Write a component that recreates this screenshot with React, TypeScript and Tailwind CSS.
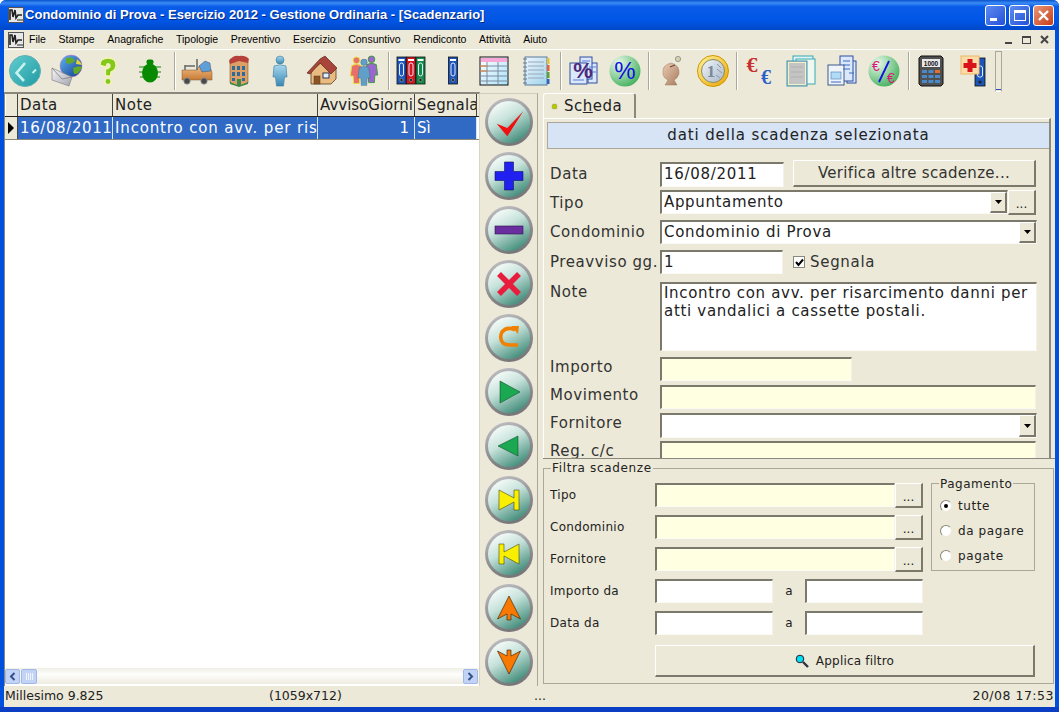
import React from "react";

const sunken = "border-t-2 border-l-2 border-r border-b border-t-[#7b796c] border-l-[#7b796c] border-r-[#f4f2e8] border-b-[#fbfaf4]";
const raised = "border-t border-l border-r-2 border-b-2 border-t-white border-l-white border-r-[#7b796c] border-b-[#7b796c] bg-[#ece9d8]";

function AppIcon({ s = 16 }: { s?: number }) {
  return (
    <svg width={s} height={s} viewBox="0 0 16 16">
      <rect x="0.5" y="0.5" width="15" height="15" fill="#e8e8e8" stroke="#555" />
      <path d="M2 13 L2 3 L4 3 L5 10 L7 3 L8 11 L10 8 L14 8" fill="none" stroke="#222" strokeWidth="1.6" />
      <path d="M9 13 L15 13" stroke="#888" strokeWidth="2" />
    </svg>
  );
}

function Tb({ children }: { children: React.ReactNode }) {
  return <div className="w-[41.7px] h-[42px] shrink-0 flex items-center justify-center">{children}</div>;
}

function Sep() {
  return <div className="w-[2px] h-[38px] shrink-0 border-l border-l-[#aca899] border-r border-r-white" />;
}

function Grad({ id, a, b, diag = true }: { id: string; a: string; b: string; diag?: boolean }) {
  return (
    <linearGradient id={id} x1="0" y1="0" x2={diag ? "1" : "0"} y2="1">
      <stop offset="0" stopColor={a} />
      <stop offset="1" stopColor={b} />
    </linearGradient>
  );
}

const I = { width: 32, height: 32, viewBox: "0 0 32 32", className: "overflow-visible" };

function Folder({ x, c }: { x: number; c: string }) {
  return (
    <g>
      <rect x={x} y="2" width="9" height="27" fill={c} stroke="#111" strokeWidth="0.8" />
      <rect x={x + 1.5} y="4" width="6" height="2" fill="#fff" />
      <rect x={x + 2.5} y="8" width="4" height="13" rx="2" fill="none" stroke="#dfeaff" strokeWidth="1" />
      <circle cx={x + 4.5} cy="25" r="1.6" fill="#222" stroke="#bbb" strokeWidth="0.5" />
    </g>
  );
}

function Person({ x, y, c, k = 1, st = "#00000055", sw = 0.5 }: { x: number; y: number; c: string; k?: number; st?: string; sw?: number }) {
  return (
    <g transform={`translate(${x} ${y}) scale(${k})`}>
      <circle cx="0" cy="3.5" r="3.5" fill={c} stroke={st} strokeWidth={sw} />
      <path d="M-5 9 Q0 6.5 5 9 L6.5 20 L3.5 20 L3 28 L-3 28 L-3.5 20 L-6.5 20 Z" fill={c} stroke={st} strokeWidth={sw} />
    </g>
  );
}

function Doc({ x, y, w, h, c = "#dbe8fb", s = "#2f4f9f" }: { x: number; y: number; w: number; h: number; c?: string; s?: string }) {
  return <rect x={x} y={y} width={w} height={h} fill={c} stroke={s} strokeWidth="1" />;
}

const toolbar: React.ReactNode[][] = [
  [
    <svg {...I} key="a">
      <defs><Grad id="t1" a="#62cdd0" b="#1f9aa2" /></defs>
      <circle cx="16" cy="16" r="15.5" fill="url(#t1)" stroke="#5fb0b4" />
      <path d="M16 8 L7.5 18 L15 26" fill="none" stroke="#c8f2ee" strokeWidth="2.6" />
      <path d="M27 14.5 L23.5 18" stroke="#c8f2ee" strokeWidth="2" />
    </svg>,
    <svg {...I} key="b">
      <defs><Grad id="t2" a="#5fb8f4" b="#12388a" /><Grad id="t2b" a="#f8f8f8" b="#a2a2ac" /></defs>
      <circle cx="20" cy="11" r="11" fill="url(#t2)" stroke="#d070d0" strokeWidth="0.5" />
      <path d="M15 3 Q22 1 24 6 Q20 10 15 8 Z M22 13 Q28 10 31 12 Q28 20 23 19 Z" fill="#62a82a" />
      <path d="M26 4 Q30 7 31 10 L25 9 Z" fill="#e8d23a" />
      <path d="M1 13 L21 22 L18 31 L1 25 Z" fill="url(#t2b)" stroke="#777" strokeWidth="0.6" />
      <path d="M1 13 L11 24 L21 22" fill="none" stroke="#8d8d99" />
    </svg>,
    <svg {...I} key="c">
      <path d="M8 10 Q8 3 16 3 Q24 3 24 10 Q24 15 19 17 L18.5 21 L13.5 21 L13.5 14 Q18.5 13.5 18 10 Q17 8 15 9 L14 12 Z" fill="#84c81e" stroke="#f4f4b0" strokeWidth="1.3" />
      <circle cx="16" cy="26.5" r="3" fill="#84c81e" stroke="#f4f4b0" strokeWidth="1.1" />
    </svg>,
    <svg {...I} key="d">
      <path d="M5 12 H27 M5 17 H27 M6 22 H26" stroke="#0a8a0a" strokeWidth="1" />
      <ellipse cx="16" cy="18" rx="8" ry="9.5" fill="#078a00" />
      <rect x="12.5" y="4.5" width="7" height="5" rx="2" fill="#078a00" />
    </svg>,
  ],
  [
    <svg {...I} key="a">
      <defs><Grad id="t5" a="#eebc84" b="#c87a34" diag={false} /></defs>
      <path d="M1 15 H16 L18 11 H28 L31 17 V25 H1 Z" fill="url(#t5)" stroke="#7a5a34" strokeWidth="0.5" />
      <path d="M18 11 L24 6 L29 8 L30 16 L21 17 Z" fill="#5f9fd8" stroke="#335" strokeWidth="0.4" />
      <path d="M16 15 V4 M4 15 V10 M4 11 H14" stroke="#666" strokeWidth="1.5" fill="none" />
      <circle cx="6" cy="26" r="3.2" fill="#4a4a4a" stroke="#999" strokeWidth="0.8" /><circle cx="23" cy="26" r="3.2" fill="#4a4a4a" stroke="#999" strokeWidth="0.8" />
    </svg>,
    <svg {...I} key="b">
      <path d="M7 4 L25 6 V28 L16 31 L7 28 Z" fill="#dca066" stroke="#6a4b22" strokeWidth="0.5" />
      <path d="M6 6 Q10 0 16 1 Q22 0 26 4 L25 8 L16 6 L7 9 Z" fill="#b8403a" />
      <path d="M9 11 h3 v4 h-3z M14 11 h3 v4 h-3z M19 11 h3 v4 h-3z M9 17 h3 v4 h-3z M14 17 h3 v4 h-3z M19 17 h3 v4 h-3z M9 23 h3 v3 h-3z M19 23 h3 v3 h-3z" fill="#2e6a9a" />
      <path d="M7 27 L14 30 V24 H18 V30 L25 27 V29 L16 32 L7 29 Z" fill="#3f8a4a" />
    </svg>,
    <svg {...I} key="c">
      <defs><Grad id="t7" a="#a8d8f0" b="#3a88b4" diag={false} /></defs>
      <circle cx="16" cy="5" r="4" fill="url(#t7)" stroke="#3a7a9a" strokeWidth="0.6" />
      <path d="M10 11 Q16 8.5 22 11 L23 22 L20.5 22 L19.5 31 L12.5 31 L11.5 22 L9 22 Z" fill="url(#t7)" stroke="#3a7a9a" strokeWidth="0.6" />
    </svg>,
    <svg {...I} key="d">
      <path d="M5 16 V29 H25 L30 24 V14 L16 7 Z" fill="#eabb80" stroke="#5a3a1a" strokeWidth="0.8" />
      <path d="M1 18 L14 4 L19 1 L31 13 L25 19 L14 8 L4 19 Z" fill="#a8443a" stroke="#5a2a1a" strokeWidth="0.7" />
      <rect x="8" y="21" width="6" height="8" fill="#8a5428" stroke="#5a3a1a" strokeWidth="0.5" />
      <rect x="17" y="18" width="6" height="5" fill="#dff0ff" stroke="#224" strokeWidth="0.9" />
    </svg>,
    <svg {...I} key="e">
      <Person x={8.5} y={2} c="#e8706a" k={0.95} st="#e8e03a" sw={1} />
      <Person x={23.5} y={1} c="#9a68cc" k={0.95} st="#3a9a3a" sw={1} />
      <Person x={16} y={4} c="#5f9fc8" k={0.95} />
    </svg>,
  ],
  [
    <svg {...I} key="a"><Folder x={2} c="#1c55b8" /><Folder x={11.5} c="#d8141c" /><Folder x={21} c="#128a4a" /></svg>,
    <svg {...I} key="b"><Folder x={11.5} c="#1c55b8" /></svg>,
    <svg {...I} key="c">
      <defs><Grad id="t12" a="#ffffff" b="#a9e2f8" /></defs>
      <rect x="2" y="2" width="28" height="28" fill="url(#t12)" stroke="#111" />
      <rect x="3" y="3" width="26" height="4" fill="#f8a8d8" />
      <path d="M2 11 H30 M2 16 H30 M2 21 H30 M2 26 H30" stroke="#7a8aa0" />
      <path d="M9 7 V30 M20 7 V30" stroke="#7a8aa0" />
      <path d="M2 11 H9 M2 16 H9" stroke="#e88030" />
    </svg>,
    <svg {...I} key="d">
      <defs><Grad id="t13" a="#eef6ff" b="#9fd2ea" /></defs>
      <rect x="5" y="2" width="22" height="28" fill="url(#t13)" stroke="#5a7a9a" />
      <path d="M8 7 H24 M8 11 H24 M8 15 H24 M8 19 H24 M8 23 H24" stroke="#9aa8b8" />
      <path d="M3 4 H7 M3 8 H7 M3 12 H7 M3 16 H7 M3 20 H7 M3 24 H7 M3 28 H7" stroke="#6a7a8a" />
      <rect x="27" y="3" width="2.5" height="6" fill="#e8c030" /><rect x="27" y="10" width="2.5" height="6" fill="#e86030" /><rect x="27" y="17" width="2.5" height="6" fill="#60a030" /><rect x="27" y="24" width="2.5" height="5" fill="#3060c0" />
    </svg>,
  ],
  [
    <svg {...I} key="a">
      <Doc x={21} y={8} w={9} h={20} /><Doc x={13} y={2} w={12} h={22} /><Doc x={3} y={8} w={17} h={21} />
      <path d="M6 25 H17 M22 12 H29 M22 17 H29 M15 6 H23" stroke="#5a7ad8" />
      <text x="16" y="23" textAnchor="middle" fontSize="22" fontWeight="700" fontFamily="Liberation Sans" fill="#4a2a7a">%</text>
    </svg>,
    <svg {...I} key="b">
      <defs><radialGradient id="t15" cx="0.3" cy="0.25" r="0.85"><stop offset="0" stopColor="#e8f8e8" /><stop offset="1" stopColor="#3fae5a" /></radialGradient></defs>
      <circle cx="16" cy="16" r="15.5" fill="url(#t15)" />
      <text x="16" y="24" textAnchor="middle" fontSize="24" fontFamily="Liberation Sans" fill="#1010e0">%</text>
    </svg>,
  ],
  [
    <svg {...I} key="a">
      <defs><Grad id="t16" a="#eccab0" b="#a67c60" /></defs>
      <path d="M16 8 Q25 10 24 19 Q22 24 19 25 L22 30 H10 L13 25 Q8 23 8 18 Q7 10 16 8 Z" fill="url(#t16)" stroke="#8a6a50" strokeWidth="0.4" />
      <path d="M15 12 L20 10" stroke="#5a4030" strokeWidth="1" />
      <circle cx="23" cy="4" r="2.6" fill="#d4d4a8" stroke="#999" strokeWidth="1" />
    </svg>,
    <svg {...I} key="b">
      <defs><Grad id="t17" a="#fff4a0" b="#eaa400" /><Grad id="t17b" a="#f2f6fa" b="#a8b8c8" /></defs>
      <circle cx="16" cy="16" r="15.5" fill="url(#t17)" stroke="#d09800" />
      <circle cx="16" cy="16" r="11.5" fill="url(#t17b)" stroke="#8a8a5a" />
      <text x="14" y="22" textAnchor="middle" fontSize="17" fontFamily="Liberation Serif" fontWeight="700" fill="#7a8898">1</text>
      <path d="M20 9 L24 13 M20 14 L25 18 M19 20 L23 23" stroke="#8a98a8" strokeWidth="1" />
    </svg>,
  ],
  [
    <svg {...I} key="a">
      <text x="9" y="17" textAnchor="middle" fontSize="22" fontWeight="700" fontFamily="Liberation Serif" fill="#c83030">€</text>
      <text x="23" y="29" textAnchor="middle" fontSize="20" fontWeight="700" fontFamily="Liberation Serif" fill="#2a60c8">€</text>
    </svg>,
    <svg {...I} key="b">
      <Doc x={8} y={1} w={20} h={25} c="#dff4f6" s="#38a8b0" />
      <Doc x={11} y={4} w={19} h={25} c="#eef8f0" s="#38a8b0" />
      <Doc x={2} y={6} w={20} h={25} c="#c4c4c4" s="#3898b0" />
      <rect x="3.5" y="7.5" width="17" height="22" fill="none" stroke="#f4f0c8" />
      <path d="M6 12 H18 M6 17 H18 M6 22 H18" stroke="#b0b0b0" />
    </svg>,
    <svg {...I} key="c">
      <Doc x={21} y={6} w={9} h={22} /><Doc x={14} y={1} w={13} h={25} /><Doc x={2} y={10} w={16} h={20} c="#f0f4fa" s="#3a5a8a" />
      <rect x="5" y="17" width="10" height="7" fill="#b0dcf8" stroke="#4a7ab0" strokeWidth="0.6" />
      <path d="M5 27 H15 M17 6 H24 M17 10 H24 M17 14 H24 M23 18 H28" stroke="#3a6ac0" />
    </svg>,
    <svg {...I} key="d">
      <defs><radialGradient id="t21" cx="0.3" cy="0.25" r="0.85"><stop offset="0" stopColor="#e8f8e8" /><stop offset="1" stopColor="#3fae5a" /></radialGradient></defs>
      <circle cx="16" cy="16" r="15.5" fill="url(#t21)" />
      <text x="8" y="16" textAnchor="middle" fontSize="14" fontFamily="Liberation Sans" fill="#e0107a">€</text>
      <text x="23" y="28" textAnchor="middle" fontSize="14" fontFamily="Liberation Sans" fill="#e0107a">€</text>
      <path d="M21 6 L11 27" stroke="#1010e0" strokeWidth="1.8" />
    </svg>,
  ],
  [
    <svg {...I} key="a">
      <path d="M6 1 H26 L28 3 V29 L26 31 H6 L4 29 V3 Z" fill="#505050" stroke="#111" />
      <rect x="7" y="4" width="18" height="8" fill="#e8e8e8" />
      <text x="16" y="10.5" textAnchor="middle" fontSize="6.5" fontWeight="700" fontFamily="Liberation Sans" fill="#111">1000</text>
      <path d="M7 15 h5 v3 h-5z M13.5 15 h5 v3 h-5z M7 20 h5 v3 h-5z M13.5 20 h5 v3 h-5z M20 20 h5 v3 h-5z M7 25 h5 v3 h-5z M13.5 25 h5 v3 h-5z M20 25 h5 v3 h-5z" fill="#4a8ac8" />
      <rect x="20" y="15" width="5" height="3" fill="#e07030" />
    </svg>,
    <svg {...I} key="b">
      <rect x="18" y="3" width="10" height="28" fill="#1c55b8" stroke="#111" strokeWidth="0.8" />
      <rect x="20.5" y="11" width="5" height="11" rx="2" fill="none" stroke="#dfeaff" />
      <circle cx="23" cy="27" r="1.6" fill="#222" />
      <rect x="4" y="1" width="18" height="18" fill="#fbdca8" stroke="#f0b868" />
      <path d="M10.5 4 h5 v4 h4 v5 h-4 v4 h-5 v-4 h-4 v-5 h4 z" fill="#d81418" />
    </svg>,
  ],
];

function Round({ children }: { children: React.ReactNode }) {
  return (
    <div className="w-[48px] h-[48px] shrink-0 rounded-full p-[3px] bg-[linear-gradient(160deg,#c4c4c8,#8a8a8c_60%,#6e6e70)]">
      <div className="w-full h-full rounded-full bg-[linear-gradient(150deg,#f4faf8_12%,#c6e2da_42%,#2f806c_95%)] flex items-center justify-center">
        {children}
      </div>
    </div>
  );
}

const R = { width: 34, height: 34, viewBox: "0 0 34 34" };
const roundIcons: React.ReactNode[] = [
  <svg {...R}><path d="M4.7 18.7 L15.3 23 L31.3 6.3 L15.3 31.3 Z" fill="#f01010" /></svg>,
  <svg {...R}><path d="M12.5 3 H21.5 V12.5 H31 V21.5 H21.5 V31 H12.5 V21.5 H3 V12.5 H12.5 Z" fill="#2020f0" stroke="#101060" strokeWidth="0.6" /></svg>,
  <svg {...R}><rect x="3" y="13" width="28" height="8" fill="#6a2f9e" stroke="#301050" strokeWidth="0.6" /></svg>,
  <svg {...R}><path d="M7 7 L27 27 M27 7 L7 27" stroke="#e81c3c" strokeWidth="5.5" fill="none" /></svg>,
  <svg {...R}><path d="M23 9 Q15 5 10 11 Q7 17 11 22 Q13 24 18 24 H26" fill="none" stroke="#f08000" strokeWidth="3.6" /><path d="M19 5 L27 5 L26 13 Z" fill="#f08000" /></svg>,
  <svg {...R}><path d="M8 6 L28 17 L8 28 Z" fill="#1aa850" stroke="#0a3a20" strokeWidth="0.5" /></svg>,
  <svg {...R}><path d="M26 7 L6 17 L26 27 Z" fill="#1aa850" stroke="#0a3a20" strokeWidth="0.5" /></svg>,
  <svg {...R}><path d="M7 7 L22 15 V7 H27 V27 H22 V19 L7 27 Z" fill="#f8f000" stroke="#302800" strokeWidth="0.5" /></svg>,
  <svg {...R}><path d="M27 7 L12 15 V7 H7 V27 H12 V19 L27 27 Z" fill="#f8f000" stroke="#302800" strokeWidth="0.5" /></svg>,
  <svg {...R}><path d="M17 5 L28.5 28 L19 23 V29 H15 V23 L5.5 28 Z" fill="#f87800" stroke="#301800" strokeWidth="0.6" /></svg>,
  <svg {...R}><path d="M17 29 L28.5 6 L19 11 V5 H15 V11 L5.5 6 Z" fill="#f87800" stroke="#301800" strokeWidth="0.6" /></svg>,
];

function Arrow() {
  return (
    <div className={`w-[17px] h-full shrink-0 ${raised} flex items-center justify-center`}>
      <svg width="7" height="4" viewBox="0 0 7 4"><path d="M0 0 H7 L3.5 4 Z" fill="#000" /></svg>
    </div>
  );
}

function Dots({ cls }: { cls: string }) {
  return <div className={`${cls} ${raised} flex items-end justify-center pb-[2px] text-[12px] leading-[14px] text-[#222]`}>...</div>;
}

function L({ children }: { children: React.ReactNode }) {
  return <div className="w-[110px] shrink-0 text-[15px] tracking-[0.58px] leading-[20px] text-[#333] whitespace-nowrap">{children}</div>;
}

function FL({ children }: { children: React.ReactNode }) {
  return <div className="w-[105px] shrink-0 text-[12px] tracking-[0.3px] text-[#222]">{children}</div>;
}

function Radio({ on, label }: { on?: boolean; label: string }) {
  return (
    <div className="flex items-center h-[25px] gap-[6px]">
      <div className="w-[12px] h-[12px] rounded-full bg-white border border-t-[#8a887c] border-l-[#8a887c] border-r-[#ece9d8] border-b-[#ece9d8] flex items-center justify-center">
        {on && <div className="w-[4px] h-[4px] rounded-full bg-black" />}
      </div>
      <span className="text-[12px] tracking-[0.6px] text-[#222]">{label}</span>
    </div>
  );
}

export default function App() {
  return (
    <div className="w-[1059px] h-[712px] flex flex-col overflow-hidden bg-[#0050e0] font-['DejaVu_Sans',sans-serif] rounded-t-[6px]">
      {/* title */}
      <div className="h-[30px] shrink-0 flex items-center pl-[8px] bg-[linear-gradient(to_bottom,#0a52cc,#3a8cf6_10%,#0a5ce8_22%,#0055e5_70%,#0048c8_100%)]">
        <AppIcon />
        <div className="ml-[1px] text-[13px] font-bold font-['Liberation_Sans',sans-serif] tracking-[0.03px] text-white [text-shadow:1px_1px_0_#0a2a80]">
          Condominio di Prova - Esercizio 2012 - Gestione Ordinaria - [Scadenzario]
        </div>
        <div className="ml-auto flex gap-[3px] pr-[5px]">
          <div className="w-[21px] h-[21px] rounded-[3px] border border-white bg-[linear-gradient(135deg,#5c8cf0,#2450d8)] flex items-end pl-[4px] pb-[4px]"><div className="w-[7px] h-[3px] bg-white" /></div>
          <div className="w-[21px] h-[21px] rounded-[3px] border border-white bg-[linear-gradient(135deg,#5c8cf0,#2450d8)] flex items-center justify-center"><div className="w-[12px] h-[11px] border border-white border-t-[3px]" /></div>
          <div className="w-[21px] h-[21px] rounded-[3px] border border-white bg-[linear-gradient(135deg,#e89878,#c83c18)] flex items-center justify-center">
            <svg width="13" height="13" viewBox="0 0 13 13"><path d="M2 2 L11 11 M11 2 L2 11" stroke="#fff" strokeWidth="2.4" /></svg>
          </div>
        </div>
      </div>

      <div className="flex-1 min-h-0 mx-[4px] flex flex-col bg-[#ece9d8]">
        {/* menu */}
        <div className="h-[20px] shrink-0 flex items-center pl-[4px] border-b border-b-white text-[10.5px] font-['Liberation_Sans',sans-serif] text-black">
          <AppIcon />
          <div className="flex gap-[12.6px] ml-[5px]">
            {["File", "Stampe", "Anagrafiche", "Tipologie", "Preventivo", "Esercizio", "Consuntivo", "Rendiconto", "Attività", "Aiuto"].map((m) => (
              <span key={m}>{m}</span>
            ))}
          </div>
          <div className="ml-auto flex gap-[3px] pr-[3px]">
            <div className="w-[15px] h-[15px] flex items-end justify-center pb-[3px]"><div className="w-[7px] h-[2px] bg-[#444]" /></div>
            <div className="w-[15px] h-[15px] flex items-center justify-center"><div className="w-[9px] h-[8px] border border-[#444] border-t-2" /></div>
            <div className="w-[15px] h-[15px] flex items-center justify-center">
              <svg width="9" height="9" viewBox="0 0 9 9"><path d="M1 1 L8 8 M8 1 L1 8" stroke="#444" strokeWidth="2" /></svg>
            </div>
          </div>
        </div>

        {/* toolbar */}
        <div className="h-[42px] shrink-0 flex items-center">
          <div className="w-[170px] flex shrink-0">{toolbar[0].map((x, i) => <Tb key={i}>{x}</Tb>)}</div>
          <Sep />
          <div className="w-[212px] flex shrink-0">{toolbar[1].map((x, i) => <Tb key={i}>{x}</Tb>)}</div>
          <Sep />
          <div className="w-[170px] flex shrink-0">{toolbar[2].map((x, i) => <Tb key={i}>{x}</Tb>)}</div>
          <Sep />
          <div className="w-[86px] flex shrink-0">{toolbar[3].map((x, i) => <Tb key={i}>{x}</Tb>)}</div>
          <Sep />
          <div className="w-[86px] flex shrink-0">{toolbar[4].map((x, i) => <Tb key={i}>{x}</Tb>)}</div>
          <Sep />
          <div className="w-[170px] flex shrink-0">{toolbar[5].map((x, i) => <Tb key={i}>{x}</Tb>)}</div>
          <Sep />
          <div className="w-[85px] flex shrink-0">{toolbar[6].map((x, i) => <Tb key={i}>{x}</Tb>)}</div>
          <div className="w-[7px] h-[41px] shrink-0 border border-[#aca899] border-b-white flex items-end justify-center pb-[1px]"><div className="w-[5px] h-[1px] bg-[#2a50c0]" /></div>
        </div>

        {/* main */}
        <div className="h-[594px] shrink-0 flex">
          {/* grid */}
          <div className="w-[476px] shrink-0 flex flex-col bg-white border-t-2 border-l border-t-[#8a887c] border-l-[#8a887c] border-r border-r-[#d8d5c5]">
            <div className="h-[23px] shrink-0 flex bg-[#ece9d8] text-[15px] leading-[23px] text-[#222] border-b border-b-[#222] whitespace-nowrap">
              <div className="w-[13px] shrink-0 border-r border-r-[#444] border-l border-l-white" />
              <div className="w-[95px] shrink-0 pl-[2px] border-r border-r-[#444] tracking-[0.5px]">Data</div>
              <div className="w-[205px] shrink-0 pl-[2px] border-r border-r-[#444] tracking-[0.5px]">Note</div>
              <div className="w-[97px] shrink-0 pl-[2px] border-r border-r-[#444] overflow-hidden">AvvisoGiorni</div>
              <div className="w-[62px] shrink-0 pl-[2px] border-r border-r-[#444] overflow-hidden tracking-[0.2px]">Segnala</div>
            </div>
            <div className="h-[23px] shrink-0 flex text-[15px] leading-[22px] text-white border-b border-b-[#8a887c]">
              <div className="w-[13px] shrink-0 bg-[#ece9d8] border-r border-r-[#444] flex items-center justify-center">
                <svg width="6" height="12" viewBox="0 0 6 12"><path d="M0 0 L6 6 L0 12 Z" fill="#000" /></svg>
              </div>
              <div className="w-[95px] shrink-0 pl-[2px] bg-[#316ac5] border-r border-r-[#d8e4f4] whitespace-nowrap overflow-hidden tracking-[0.6px]">16/08/2011</div>
              <div className="w-[205px] shrink-0 pl-[2px] bg-[#316ac5] border-r border-r-[#d8e4f4] whitespace-nowrap overflow-hidden tracking-[0.85px]">Incontro con avv. per risarcimento</div>
              <div className="w-[97px] shrink-0 text-right pr-[5px] bg-[#316ac5] border-r border-r-[#d8e4f4]">1</div>
              <div className="w-[62px] shrink-0 pl-[2px] bg-[#316ac5] border-r border-r-[#d8e4f4]">Sì</div>
            </div>
            <div className="flex-1" />
            <div className="h-[16px] shrink-0 flex items-center justify-between bg-[linear-gradient(to_bottom,#f0efe6,#fdfdfb_40%,#eeebe0)] mb-[2px]">
              <div className="flex gap-[1px]">
                <div className="w-[15px] h-[15px] rounded-[2px] bg-[#c2d3f5] border border-[#a0b8e8] flex items-center justify-center">
                  <svg width="7" height="9" viewBox="0 0 7 9"><path d="M5.5 1 L2 4.5 L5.5 8" fill="none" stroke="#34508c" strokeWidth="2" /></svg>
                </div>
                <div className="w-[16px] h-[15px] rounded-[2px] bg-[#c2d3f5] border border-[#a0b8e8] flex items-center justify-center gap-[1px]">
                  <div className="w-[1px] h-[7px] bg-[#eef3fc]" /><div className="w-[1px] h-[7px] bg-[#eef3fc]" /><div className="w-[1px] h-[7px] bg-[#eef3fc]" /><div className="w-[1px] h-[7px] bg-[#eef3fc]" />
                </div>
              </div>
              <div className="w-[15px] h-[15px] mr-[1px] rounded-[2px] bg-[#c2d3f5] border border-[#a0b8e8] flex items-center justify-center">
                <svg width="7" height="9" viewBox="0 0 7 9"><path d="M1.5 1 L5 4.5 L1.5 8" fill="none" stroke="#34508c" strokeWidth="2" /></svg>
              </div>
            </div>
          </div>

          {/* round buttons */}
          <div className="w-[58px] shrink-0 mt-[1px] flex flex-col items-center gap-[6px] pt-[4px] border-t border-t-[#cfccbc] border-r border-r-[#aca899]">
            {roundIcons.map((x, i) => <Round key={i}>{x}</Round>)}
          </div>

          {/* right */}
          <div className="flex-1 min-w-0 pl-[5px] flex flex-col">
            <div className="h-[26px] shrink-0 pt-[1px]">
              <div className="w-[93px] h-[25px] border-t border-l border-t-white border-l-white border-r-2 border-r-[#8a887c] rounded-t-[3px] flex items-center pl-[8px] gap-[7px] text-[15px] tracking-[0.5px] text-[#222]">
                <div className="w-[5px] h-[5px] rounded-full bg-[#b8c800] shadow-[0_0_1px_#555]" />
                <span>Sc<span className="underline">h</span>eda</span>
              </div>
            </div>
            <div className="h-[340px] shrink-0 w-[508px] overflow-hidden border-t border-l border-t-white border-l-white border-r-2 border-r-[#8a887c] pl-[3px]">
              <div className="mt-[3px] h-[27px] w-[503px] bg-[#d6e4f6] border border-[#aca899] flex items-center justify-center text-[15px] tracking-[0.87px] text-[#222]">
                dati della scadenza selezionata
              </div>
              <div className="pl-[3px]">
                <div className="mt-[11px] h-[27px] flex items-center">
                  <L>Data</L>
                  <div className={`w-[124px] h-[25px] self-end ${sunken} bg-white pl-[2px] text-[15px] tracking-[0.7px] leading-[21px] text-[#222]`}>16/08/2011</div>
                  <div className={`ml-[9px] w-[243px] h-[27px] ${raised} flex items-center justify-center text-[15px] tracking-[0.3px] text-[#333]`}>Verifica altre scadenze...</div>
                </div>
                <div className="mt-[3px] h-[25px] flex items-center">
                  <L>Tipo</L>
                  <div className={`w-[348px] h-[24px] self-start ${sunken} bg-white flex justify-between pl-[2px] text-[15px] tracking-[0.65px] leading-[20px] text-[#222]`}>Appuntamento<Arrow /></div>
                  <Dots cls="w-[28px] h-[25px]" />
                </div>
                <div className="mt-[5px] h-[24px] flex items-center">
                  <L>Condominio</L>
                  <div className={`w-[377px] h-[24px] ${sunken} bg-white flex justify-between pl-[2px] text-[15px] tracking-[0.7px] leading-[20px] text-[#222]`}>Condominio di Prova<Arrow /></div>
                </div>
                <div className="mt-[6px] h-[24px] flex items-center">
                  <L>Preavviso gg.</L>
                  <div className={`w-[123px] h-[24px] ${sunken} bg-white pl-[2px] text-[15px] leading-[20px] text-[#222]`}>1</div>
                  <div className={`ml-[10px] w-[12px] h-[12px] bg-white border border-[#8a887c] flex items-center justify-center`}>
                    <svg width="9" height="9" viewBox="0 0 9 9"><path d="M1 4 L3.5 7 L8 1.5" fill="none" stroke="#000" strokeWidth="2" /></svg>
                  </div>
                  <span className="ml-[5px] text-[15px] tracking-[0.7px] text-[#333]">Segnala</span>
                </div>
                <div className="mt-[8px] h-[69px] flex">
                  <L>Note</L>
                  <div className={`w-[377px] h-[69px] ${sunken} bg-white pl-[2px] text-[15px] leading-[18px] tracking-[0.69px] text-[#222] whitespace-nowrap`}>Incontro con avv. per risarcimento danni per<br />atti vandalici a cassette postali.</div>
                </div>
                <div className="mt-[6px] h-[24px] flex items-start">
                  <L>Importo</L>
                  <div className={`w-[192px] h-[24px] ${sunken} bg-[#ffffe1]`} />
                </div>
                <div className="mt-[4px] h-[24px] flex items-start">
                  <L>Movimento</L>
                  <div className={`w-[376px] h-[24px] ${sunken} bg-[#ffffe1]`} />
                </div>
                <div className="mt-[4px] h-[25px] flex items-start">
                  <L>Fornitore</L>
                  <div className={`w-[377px] h-[25px] ${sunken} bg-white flex justify-end`}><Arrow /></div>
                </div>
                <div className="mt-[3px] h-[24px] flex items-start">
                  <L>Reg. c/c</L>
                  <div className={`w-[376px] h-[24px] ${sunken} bg-[#ffffe1]`} />
                </div>
              </div>
            </div>
            <div className="h-[10px] shrink-0 border-t border-t-[#8a887c]" />
            <div className="relative h-[216px] shrink-0 w-[511px] border border-[#aca899] pl-[6px] pt-[14px]">
              <span className="absolute left-[7px] -top-[7px] px-[1px] bg-[#ece9d8] text-[12px] leading-[13px] tracking-[0.65px] text-[#222]">Filtra scadenze</span>
              <div className="flex">
                <div className="w-[381px] shrink-0 flex flex-col gap-[8px]">
                  <div className="h-[24px] flex items-center"><FL>Tipo</FL><div className={`w-[240px] h-[24px] ${sunken} bg-[#ffffe1]`} /><Dots cls="w-[28px] h-[25px]" /></div>
                  <div className="h-[24px] flex items-center"><FL>Condominio</FL><div className={`w-[240px] h-[24px] ${sunken} bg-[#ffffe1]`} /><Dots cls="w-[28px] h-[25px]" /></div>
                  <div className="h-[24px] flex items-center"><FL>Fornitore</FL><div className={`w-[240px] h-[24px] ${sunken} bg-[#ffffe1]`} /><Dots cls="w-[28px] h-[25px]" /></div>
                  <div className="h-[24px] flex items-center"><FL>Importo da</FL><div className={`w-[118px] h-[24px] ${sunken} bg-white`} /><span className="w-[32px] text-center text-[12px] text-[#222]">a</span><div className={`w-[118px] h-[24px] ${sunken} bg-white`} /></div>
                  <div className="h-[24px] flex items-center"><FL>Data da</FL><div className={`w-[118px] h-[24px] ${sunken} bg-white`} /><span className="w-[32px] text-center text-[12px] text-[#222]">a</span><div className={`w-[118px] h-[24px] ${sunken} bg-white`} /></div>
                </div>
                <div className="relative w-[104px] h-[88px] shrink-0 border border-[#aca899] pl-[8px] pt-[9px]">
                  <span className="absolute left-[7px] -top-[6px] px-[1px] bg-[#ece9d8] text-[12px] leading-[13px] tracking-[0.5px] text-[#222]">Pagamento</span>
                  <Radio on label="tutte" />
                  <Radio label="da pagare" />
                  <Radio label="pagate" />
                </div>
              </div>
              <div className="mt-[10px] ml-[105px] w-[380px] h-[32px]">
                <div className={`w-full h-full ${raised} flex items-center justify-center gap-[7px] text-[12px] tracking-[0.2px] text-[#222]`}>
                  <svg width="14" height="14" viewBox="0 0 14 14"><circle cx="5" cy="5" r="3.8" fill="#00e0f0" stroke="#223" strokeWidth="1" /><path d="M8 8 L13 13" stroke="#334" strokeWidth="2.4" /></svg>
                  <span>Applica filtro</span>
                </div>
              </div>
            </div>
          </div>
        </div>

        {/* status */}
        <div className="flex-1 flex items-center text-[12.5px] text-[#222] pb-[1px]">
          <div className="w-[265px] pl-[1px]">Millesimo 9.825</div>
          <div className="w-[265px]">(1059x712)</div>
          <div className="flex-1">...</div>
          <div className="pr-[1px] tracking-[0.5px]">20/08 17:53</div>
        </div>
      </div>
      <div className="h-[5px] shrink-0 bg-[#0a3fc4]" />
    </div>
  );
}
